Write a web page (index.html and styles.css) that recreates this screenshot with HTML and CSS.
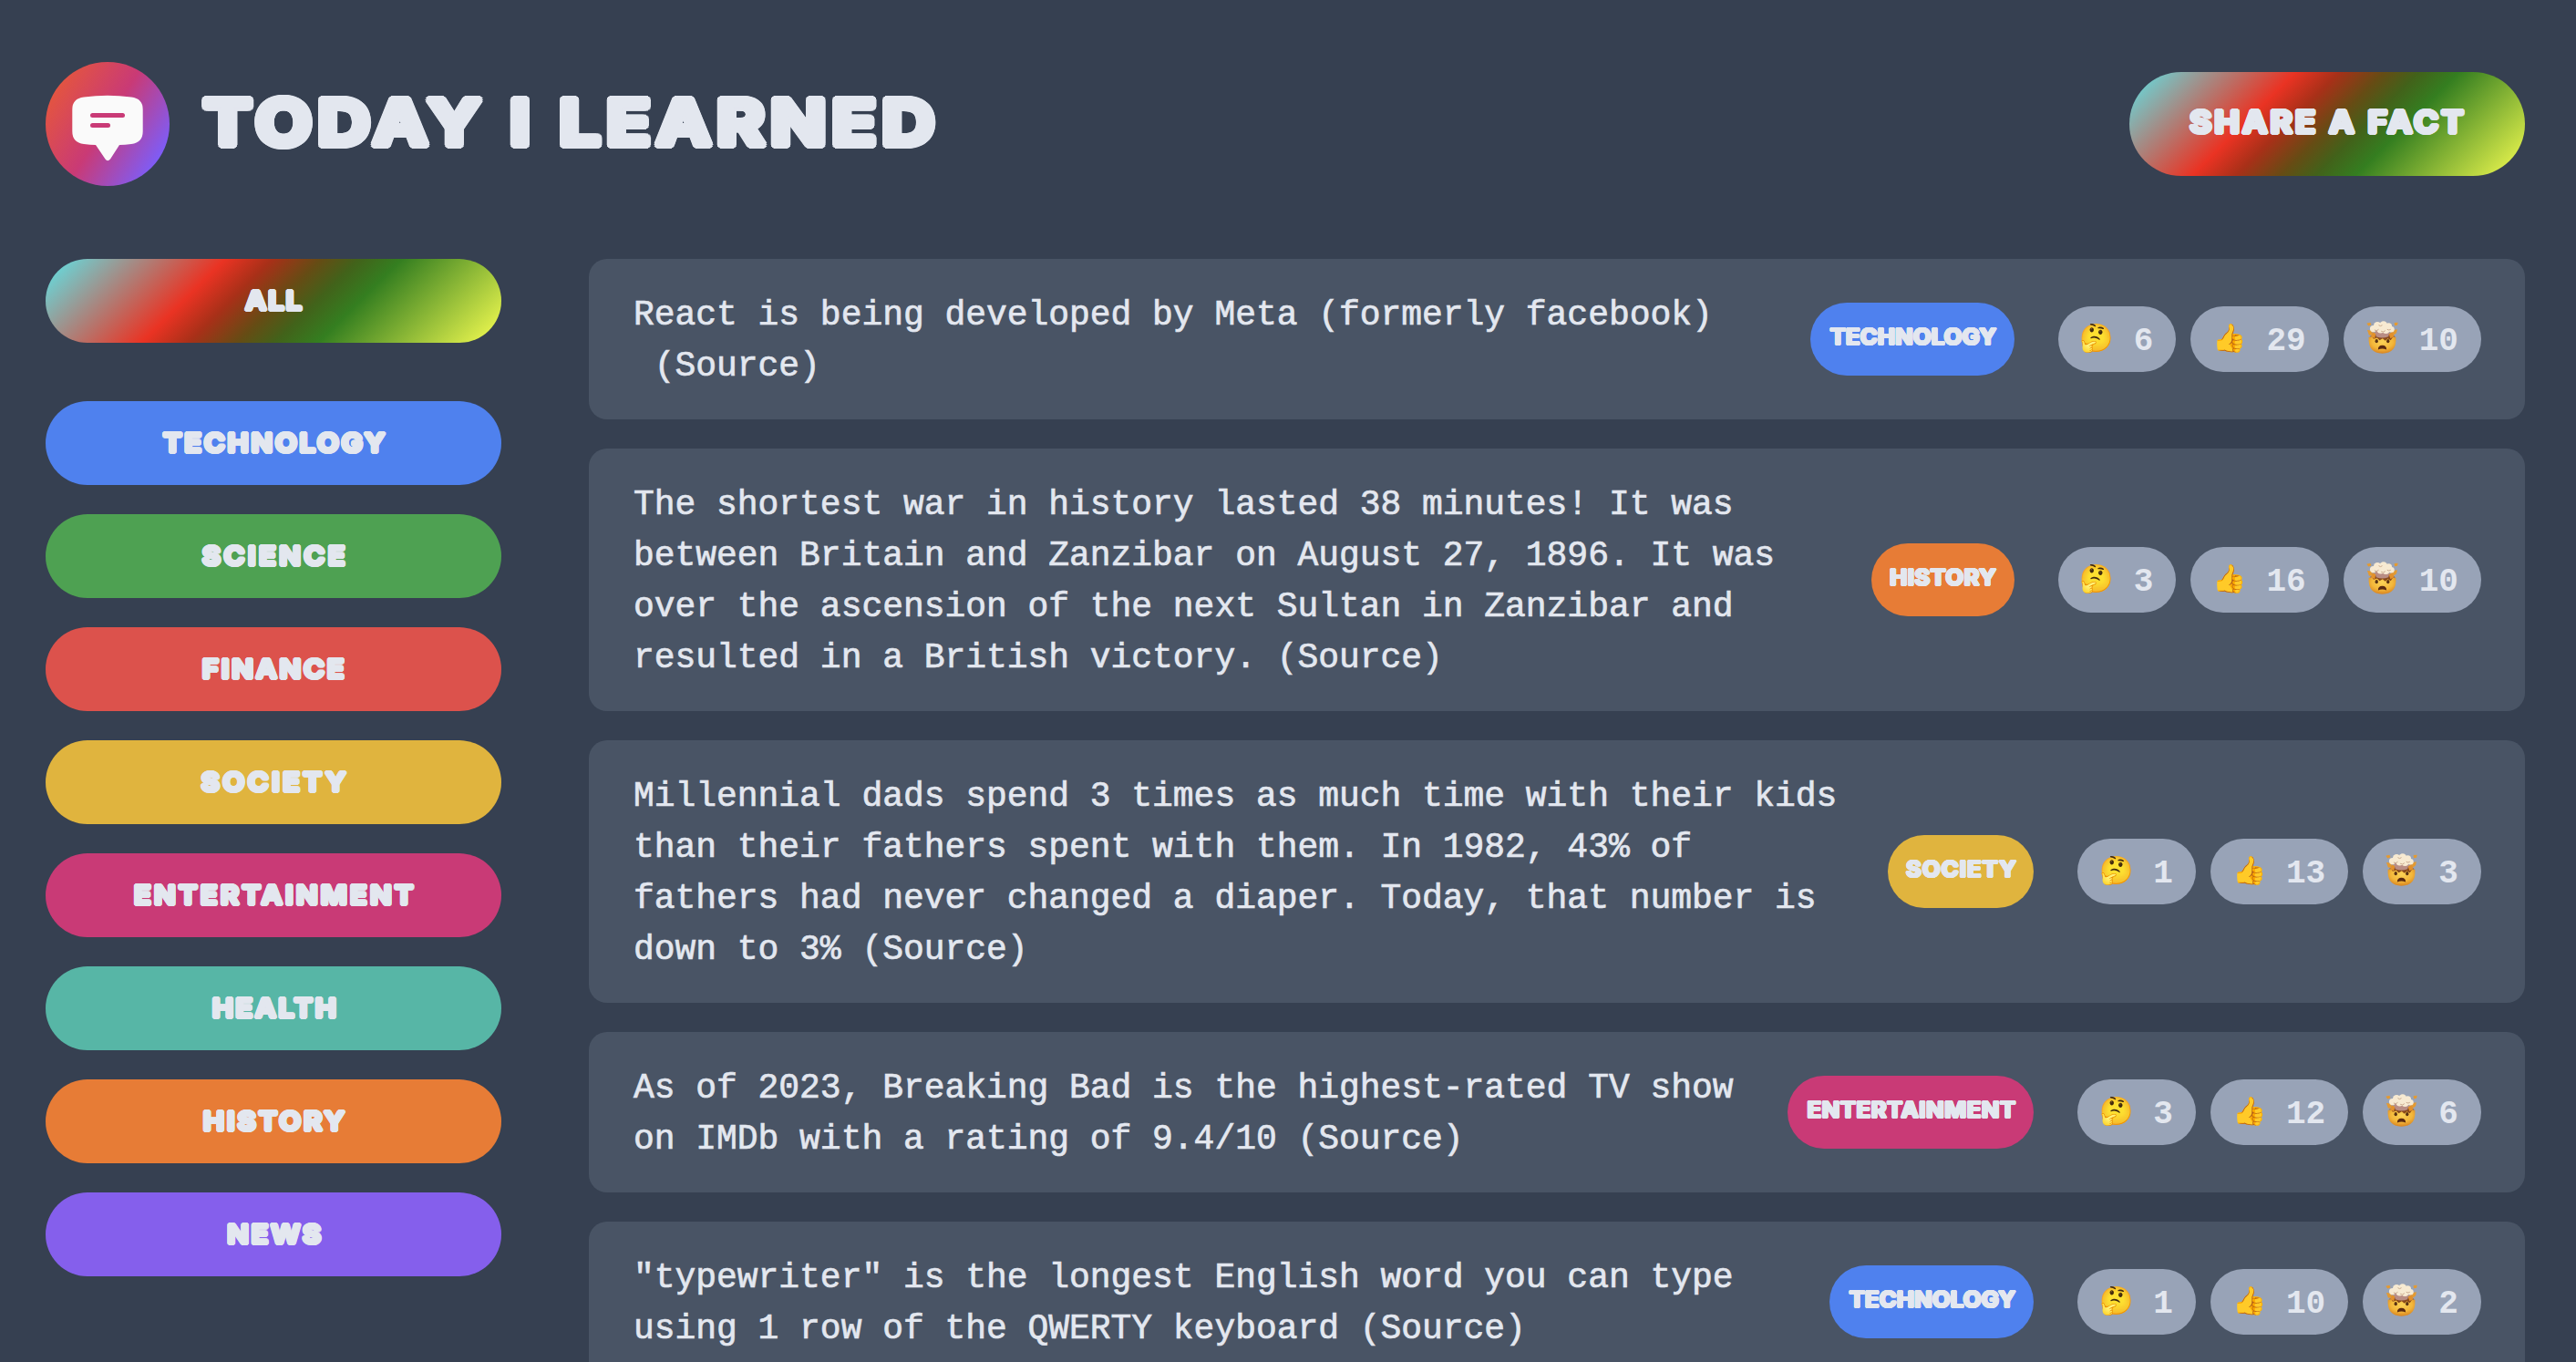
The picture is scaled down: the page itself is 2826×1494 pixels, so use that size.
FILE: index.html
```html
<!DOCTYPE html>
<html lang="en">
<head>
<meta charset="utf-8">
<title>Today I Learned</title>
<link rel="stylesheet" href="styles.css">
</head>
<body>
<svg class="defs" width="0" height="0" aria-hidden="true">
  <defs>
    <linearGradient id="logo-bg" x1="0.06" y1="0.22" x2="0.92" y2="0.76">
      <stop offset="0" stop-color="#e4553f"/>
      <stop offset="0.5" stop-color="#c93a76"/>
      <stop offset="1" stop-color="#7f5cf5"/>
    </linearGradient>
    <radialGradient id="skin" cx="0.5" cy="0.35" r="0.65">
      <stop offset="0" stop-color="#fbd356"/>
      <stop offset="0.6" stop-color="#f3b73a"/>
      <stop offset="1" stop-color="#d98420"/>
    </radialGradient>
    <symbol id="mindblown" viewBox="16 32 112 112">
      <path d="M20 40l12-3 4 8-10 4zM112 38l12-1-2 9-9 2zM22 62l14 2 4 14-12 2zM108 62l14-2-3 12-12 10z" fill="#e39a32"/>
      <path d="M27 86q45-10 90 0q4 54-45 54q-48 0-45-54z" fill="url(#skin)"/>
      <path d="M30 84q20-14 42-12q24-2 43 12l-8 2-7 10-10-6-8 8-9-8-10 6-8-8-12 4-5-8z" fill="#8a4a1c"/>
      <path d="M46 66q26-8 52 0l-6 18q-20 8-40 0z" fill="#b98d84"/>
      <path d="M34 84l6-16 10 6-3 16zM94 76l12-10 5 18-12 6z" fill="#e2912c"/>
      <g fill="#f7ead2"><circle cx="42" cy="58" r="11"/><circle cx="56" cy="48" r="13"/><circle cx="76" cy="46" r="13"/><circle cx="93" cy="50" r="11"/><circle cx="102" cy="60" r="10"/><circle cx="66" cy="60" r="13"/><circle cx="84" cy="62" r="12"/></g>
      <path d="M46 62q8 6 14-2M68 66q8 6 14-2M88 60q6 5 12 0M60 46q6 6 12 0" fill="none" stroke="#c9a98c" stroke-width="3"/>
      <ellipse cx="53" cy="99" rx="5" ry="6.500" fill="#5a3212"/>
      <ellipse cx="91" cy="99" rx="5" ry="6.500" fill="#5a3212"/>
      <path d="M58 127q0-14 14-14t14 14q-14-5-28 0z" fill="#5a2a10"/>
    </symbol>
  </defs>
</svg>

<header class="header">
  <div class="brand">
    <svg class="logo" viewBox="0 0 136 136" aria-hidden="true">
      <circle cx="68" cy="68" r="68" fill="url(#logo-bg)"/>
      <path d="M42 38.500Q68 35 94 38.500Q106.700 40 106.700 52V76Q106.700 88.500 94 90Q87 91 81 91L71 106.500Q68 110 65.500 106.500L55 91Q49 91 42 90Q29.300 88.500 29.300 76V52Q29.300 40 42 38.500Z" fill="#fafafa"/>
      <rect x="49" y="56" width="38" height="5" rx="2.500" fill="#c93a76"/>
      <rect x="49" y="67" width="22" height="5" rx="2.500" fill="#c93a76"/>
    </svg>
    <h1 class="title">TODAY I LEARNED</h1>
  </div>
  <button class="btn btn-share"><span class="label label-share">SHARE A FACT</span></button>
</header>

<main class="main">
  <aside>
    <ul class="categories">
      <li class="all"><button class="btn btn-category rainbow"><span class="label ls-all">ALL</span></button></li>
      <li><button class="btn btn-category technology"><span class="label ls-technology">TECHNOLOGY</span></button></li>
      <li><button class="btn btn-category science"><span class="label ls-science">SCIENCE</span></button></li>
      <li><button class="btn btn-category finance"><span class="label ls-finance">FINANCE</span></button></li>
      <li><button class="btn btn-category society"><span class="label ls-society">SOCIETY</span></button></li>
      <li><button class="btn btn-category entertainment"><span class="label ls-entertainment">ENTERTAINMENT</span></button></li>
      <li><button class="btn btn-category health"><span class="label ls-health">HEALTH</span></button></li>
      <li><button class="btn btn-category history"><span class="label ls-history">HISTORY</span></button></li>
      <li><button class="btn btn-category news"><span class="label ls-news">NEWS</span></button></li>
    </ul>
  </aside>

  <ul class="facts">
    <li class="fact">
      <p class="fact-text">React is being developed by Meta (formerly facebook)<br>&nbsp;<a class="source">(Source)</a></p>
      <span class="tag tag-technology technology"><span class="tag-label">TECHNOLOGY</span></span>
      <div class="votes">
        <button class="vote"><span class="emoji">🤔</span> 6</button>
        <button class="vote"><span class="emoji">👍</span> 29</button>
        <button class="vote"><svg class="blown" role="img" aria-label="Mind blown"><use href="#mindblown"/></svg> 10</button>
      </div>
    </li>
    <li class="fact">
      <p class="fact-text">The shortest war in history lasted 38 minutes! It was<br>between Britain and Zanzibar on August 27, 1896. It was<br>over the ascension of the next Sultan in Zanzibar and<br>resulted in a British victory. <a class="source">(Source)</a></p>
      <span class="tag tag-history history"><span class="tag-label">HISTORY</span></span>
      <div class="votes">
        <button class="vote"><span class="emoji">🤔</span> 3</button>
        <button class="vote"><span class="emoji">👍</span> 16</button>
        <button class="vote"><svg class="blown" role="img" aria-label="Mind blown"><use href="#mindblown"/></svg> 10</button>
      </div>
    </li>
    <li class="fact">
      <p class="fact-text">Millennial dads spend 3 times as much time with their kids<br>than their fathers spent with them. In 1982, 43% of<br>fathers had never changed a diaper. Today, that number is<br>down to 3% <a class="source">(Source)</a></p>
      <span class="tag tag-society society"><span class="tag-label">SOCIETY</span></span>
      <div class="votes">
        <button class="vote"><span class="emoji">🤔</span> 1</button>
        <button class="vote"><span class="emoji">👍</span> 13</button>
        <button class="vote"><svg class="blown" role="img" aria-label="Mind blown"><use href="#mindblown"/></svg> 3</button>
      </div>
    </li>
    <li class="fact">
      <p class="fact-text">As of 2023, Breaking Bad is the highest-rated TV show<br>on IMDb with a rating of 9.4/10 <a class="source">(Source)</a></p>
      <span class="tag tag-entertainment entertainment"><span class="tag-label">ENTERTAINMENT</span></span>
      <div class="votes">
        <button class="vote"><span class="emoji">🤔</span> 3</button>
        <button class="vote"><span class="emoji">👍</span> 12</button>
        <button class="vote"><svg class="blown" role="img" aria-label="Mind blown"><use href="#mindblown"/></svg> 6</button>
      </div>
    </li>
    <li class="fact">
      <p class="fact-text">"typewriter" is the longest English word you can type<br>using 1 row of the QWERTY keyboard <a class="source">(Source)</a></p>
      <span class="tag tag-technology technology"><span class="tag-label">TECHNOLOGY</span></span>
      <div class="votes">
        <button class="vote"><span class="emoji">🤔</span> 1</button>
        <button class="vote"><span class="emoji">👍</span> 10</button>
        <button class="vote"><svg class="blown" role="img" aria-label="Mind blown"><use href="#mindblown"/></svg> 2</button>
      </div>
    </li>
  </ul>
</main>
</body>
</html>
```
FILE: styles.css
```css
* { margin: 0; padding: 0; box-sizing: border-box; }

body {
  height: 1494px;
  overflow: hidden;
  padding: 68px 56px 0 50px;
  background: #364051;
  color: #e3e7ef;
  font-family: "Liberation Mono", monospace;
}

ul { list-style: none; }
button { border: 0; color: inherit; font: inherit; }
.defs { display: block; }

.header { display: flex; justify-content: space-between; align-items: center; height: 136px; margin-bottom: 80px; }
.brand { display: flex; align-items: center; gap: 37px; }
.logo { width: 136px; height: 136px; }

/* Display lettering: heavy sans, thickened and rounded by a ring of hard shadows of radius --r */
.title, .label, .tag-label {
  display: block;
  font-family: Inter, sans-serif;
  font-weight: 700;
  line-height: 1;
  white-space: nowrap;
  text-shadow:
    calc(var(--r) * .5) 0 currentColor,
    calc(var(--r) * -.5) 0 currentColor,
    0 calc(var(--r) * .5) currentColor,
    0 calc(var(--r) * -.5) currentColor,
    var(--r) 0 currentColor,
    calc(var(--r) * -1) 0 currentColor,
    0 var(--r) currentColor,
    0 calc(var(--r) * -1) currentColor,
    calc(var(--r) * .707) calc(var(--r) * .707) currentColor,
    calc(var(--r) * -.707) calc(var(--r) * .707) currentColor,
    calc(var(--r) * .707) calc(var(--r) * -.707) currentColor,
    calc(var(--r) * -.707) calc(var(--r) * -.707) currentColor,
    calc(var(--r) * .924) calc(var(--r) * .383) currentColor,
    calc(var(--r) * -.924) calc(var(--r) * .383) currentColor,
    calc(var(--r) * .924) calc(var(--r) * -.383) currentColor,
    calc(var(--r) * -.924) calc(var(--r) * -.383) currentColor,
    calc(var(--r) * .383) calc(var(--r) * .924) currentColor,
    calc(var(--r) * -.383) calc(var(--r) * .924) currentColor,
    calc(var(--r) * .383) calc(var(--r) * -.924) currentColor,
    calc(var(--r) * -.383) calc(var(--r) * -.924) currentColor;
}

.title {
  --r: 4px;
  margin-bottom: 4px;
  font-size: 69px;
  letter-spacing: 5.5px;
  transform: scaleX(1.16);
  transform-origin: left;
}

.btn { display: flex; align-items: center; justify-content: center; border-radius: 200px; }
.label { --r: 1.7px; font-size: 28.4px; transform: scaleX(1.1); }

.btn-share, .rainbow {
  background-image: linear-gradient(135deg, #5ce6ea, #ea3323 33.3%, #a83018 42%, #664c14 51%, #42621a 58%, #347e20 66%, #f8ff52);
}
.btn-share { width: 434px; height: 114px; padding: 0 0 2px 3px; }
.label-share { --r: 2px; font-size: 33.5px; letter-spacing: 2.8px; }

.main { display: grid; grid-template-columns: 500px 2124px; gap: 96px; }

.categories { display: flex; flex-direction: column; gap: 32px; }
.all { margin-bottom: 32px; }
.btn-category { width: 500px; height: 92px; padding-left: 3px; }

.ls-all { letter-spacing: 1.6px; }
.ls-technology { letter-spacing: 2.35px; }
.ls-science { letter-spacing: 3px; }
.ls-finance { letter-spacing: 2.4px; }
.ls-society { letter-spacing: 3px; }
.ls-entertainment { letter-spacing: 2.8px; }
.ls-health { letter-spacing: 2.1px; }
.ls-history { letter-spacing: 2.5px; }
.ls-news { letter-spacing: 2.3px; }

.technology { background-color: #4f81ee; }
.science { background-color: #4ea152; }
.finance { background-color: #dc524c; }
.society { background-color: #e0b43e; }
.entertainment { background-color: #c93a76; }
.health { background-color: #57b6a6; }
.history { background-color: #e77c36; }
.news { background-color: #855fec; }

.facts { display: flex; flex-direction: column; gap: 32px; }
.fact { display: flex; align-items: center; padding: 32px 48px; border-radius: 20px; background: #495465; }
.fact-text {
  flex: 1;
  margin: 2px 0 -2px 1px;
  font-size: 38px;
  line-height: 56px;
  letter-spacing: -.04px;
  white-space: nowrap;
  -webkit-text-stroke: .7px #e3e7ef;
}

.tag { display: flex; align-items: center; justify-content: center; height: 80px; margin-right: 48px; padding: 0 0 6px 2px; border-radius: 100px; }
.tag-label { --r: 1.2px; font-size: 24.3px; transform: scaleX(1.05); }
.tag-technology { width: 224px; letter-spacing: .25px; }
.tag-history { width: 157px; letter-spacing: .5px; }
.tag-society { width: 160px; letter-spacing: 1.1px; }
.tag-entertainment { width: 270px; letter-spacing: .65px; }

.votes { display: flex; gap: 16px; }
.vote {
  display: flex;
  align-items: center;
  gap: 22px;
  height: 72px;
  padding: 5px 25.1px 0 24px;
  border-radius: 100px;
  background: #98a3b7;
  font-size: 36px;
  font-weight: 700;
  line-height: 1;
}
.emoji { width: 37px; margin-bottom: 8px; font: 30px/37px "Noto Color Emoji", sans-serif; text-align: center; }
.blown { width: 37px; height: 37px; margin-bottom: 8px; }
```
